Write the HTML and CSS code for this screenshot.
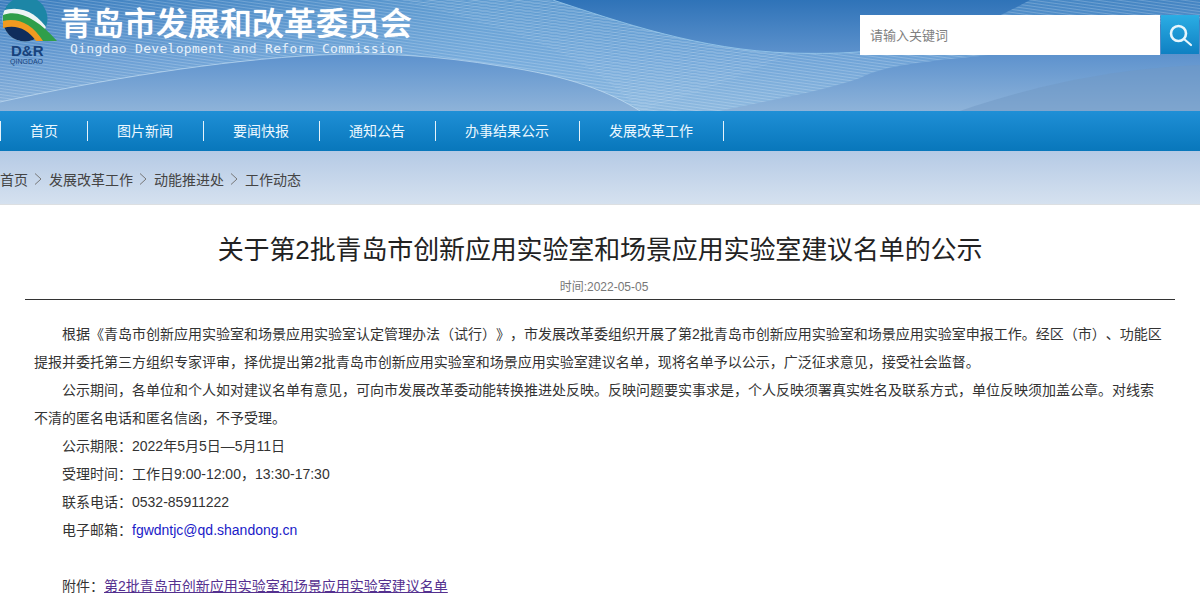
FILE: index.html
```html
<!DOCTYPE html>
<html lang="zh-CN">
<head>
    <meta charset="UTF-8">
    <title>关于第2批青岛市创新应用实验室和场景应用实验室建议名单的公示</title>
    <link rel="stylesheet" href="styles.css">
</head>
<body>
    <header class="top">
        <svg class="top-waves" width="1200" height="111" viewBox="0 0 1200 111" aria-hidden="true">
            <defs>
                <pattern id="lines" width="4" height="3" patternUnits="userSpaceOnUse" patternTransform="rotate(8)">
                    <rect width="4" height="1" fill="#fff" fill-opacity="0.2"/>
                </pattern>
                <pattern id="linesLeft" width="4" height="3" patternUnits="userSpaceOnUse" patternTransform="rotate(-12)">
                    <rect width="4" height="1" fill="#fff" fill-opacity="0.12"/>
                </pattern>
                <linearGradient id="bandFill" x1="0" y1="0" x2="1" y2="0">
                    <stop offset="0" stop-color="#8fc4ea" stop-opacity="0.12"/>
                    <stop offset="0.4" stop-color="#8fc4ea" stop-opacity="0.5"/>
                    <stop offset="0.75" stop-color="#8fc4ea" stop-opacity="0.3"/>
                    <stop offset="1" stop-color="#8fc4ea" stop-opacity="0.2"/>
                </linearGradient>
            </defs>
            <path d="M0 0H553C620 22 700 50 790 53C830 54 850 53 880 50C940 42 990 22 1030 0H1200V20C1150 25 1120 28 1090 38C1010 60 900 56 860 78C820 92 770 100 720 111H640C610 92 570 76 500 66C440 56 380 52 320 55C220 60 100 80 0 102Z" fill="url(#bandFill)"/>
            <path d="M0 0H553C620 22 700 50 790 53C830 54 850 53 880 50C940 42 990 22 1030 0H1200V20C1150 25 1120 28 1090 38C1010 60 900 56 860 78C820 92 770 100 720 111H640C610 92 570 76 500 66C440 56 380 52 320 55C220 60 100 80 0 102Z" fill="url(#lines)"/>
            <path d="M400 0H553C620 22 700 50 790 53C760 70 680 100 640 111C600 70 560 40 400 0Z" fill="url(#linesLeft)"/>
            <path d="M1200 65C1130 68 1050 80 960 111H1200Z" fill="#6f97c4" fill-opacity="0.5"/>
            <path d="M0 102C100 80 220 60 320 55C380 52 440 56 500 66C570 76 610 92 640 111" fill="none" stroke="#cfe6f7" stroke-opacity="0.6"/>
            <path d="M553 0C620 22 700 50 790 53C830 54 850 53 880 50" fill="none" stroke="#9fd0f0" stroke-opacity="0.7"/>
        </svg>
        <div class="brand">
            <div class="logo">
                <svg width="58" height="42" viewBox="0 0 58 42" aria-hidden="true">
                    <defs>
                        <clipPath id="disc"><circle cx="25" cy="19" r="22.5"/></clipPath>
                    </defs>
                    <g clip-path="url(#disc)">
                        <rect x="0" y="-5" width="50" height="50" fill="#1d86a6"/>
                        <path d="M0 12C20 3 40 14 50 34V44H0Z" fill="#eef4f4"/>
                        <path d="M0 28C14 20 30 26 40 44H0Z" fill="#0f2d5c"/>
                    </g>
                    <path d="M3 15C20 9 38 20 57 41H42C34 26 18 19 3 23Z" fill="#2f9e4a"/>
                    <path d="M3 21C17 17 33 24 43 41H36C28 29 16 24 3 28Z" fill="#f09a20"/>
                </svg>
                <strong class="logo-mark">D&amp;R</strong>
                <span class="logo-city">QINGDAO</span>
            </div>
            <div class="brand-text">
                <div class="brand-name">青岛市发展和改革委员会</div>
                <div class="brand-en">Qingdao Development and Reform Commission</div>
            </div>
        </div>
        <form class="search">
            <input class="search-input" type="text" placeholder="请输入关键词">
            <button class="search-btn" type="button" aria-label="搜索">
                <svg width="26" height="26" viewBox="0 0 26 26" aria-hidden="true">
                    <circle cx="11.5" cy="11.5" r="7.5" fill="none" stroke="#e8f6fc" stroke-width="2.6"/>
                    <path d="M17 17L24 23" stroke="#e8f6fc" stroke-width="2.2" stroke-linecap="round"/>
                </svg>
            </button>
        </form>
    </header>

    <nav class="nav">
        <a class="nav-item nav-first" href="#">首页</a>
        <a class="nav-item" href="#">图片新闻</a>
        <a class="nav-item" href="#">要闻快报</a>
        <a class="nav-item" href="#">通知公告</a>
        <a class="nav-item" href="#">办事结果公示</a>
        <a class="nav-item nav-last" href="#">发展改革工作</a>
    </nav>

    <div class="crumbs">
        <a href="#">首页</a>
        <svg class="crumb-sep" width="21" height="14" viewBox="0 0 21 14" aria-hidden="true"><path d="M7 1.5L13 7L7 12.5" fill="none" stroke="#777"/></svg>
        <a href="#">发展改革工作</a>
        <svg class="crumb-sep" width="21" height="14" viewBox="0 0 21 14" aria-hidden="true"><path d="M7 1.5L13 7L7 12.5" fill="none" stroke="#777"/></svg>
        <a href="#">动能推进处</a>
        <svg class="crumb-sep" width="21" height="14" viewBox="0 0 21 14" aria-hidden="true"><path d="M7 1.5L13 7L7 12.5" fill="none" stroke="#777"/></svg>
        <a href="#">工作动态</a>
    </div>

    <main class="article">
        <h1 class="article-title">关于第2批青岛市创新应用实验室和场景应用实验室建议名单的公示</h1>
        <div class="article-date">时间:2022-05-05</div>
        <div class="article-body">
            <p>根据《青岛市创新应用实验室和场景应用实验室认定管理办法<span class="mid">（</span>试行<span class="mid">）</span>》<span class="mid">，</span>市发展改革委组织开展了第2批青岛市创新应用实验室和场景应用实验室申报工作。经区<span class="mid">（</span>市<span class="mid">）</span>、功能区提报并委托第三方组织专家评审<span class="mid">，</span>择优提出第2批青岛市创新应用实验室和场景应用实验室建议名单<span class="mid">，</span>现将名单予以公示<span class="mid">，</span>广泛征求意见<span class="mid">，</span>接受社会监督。</p>
            <p>公示期间<span class="mid">，</span>各单位和个人如对建议名单有意见<span class="mid">，</span>可向市发展改革委动能转换推进处反映。反映问题要实事求是<span class="mid">，</span>个人反映须署真实姓名及联系方式<span class="mid">，</span>单位反映须加盖公章。对线索不清的匿名电话和匿名信函<span class="mid">，</span>不予受理。</p>
            <p>公示期限<span class="mid">：</span>2022年5月5日—5月11日</p>
            <p>受理时间<span class="mid">：</span>工作日9:00-12:00<span class="mid">，</span>13:30-17:30</p>
            <p>联系电话<span class="mid">：</span>0532-85911222</p>
            <p>电子邮箱<span class="mid">：</span><a class="mail" href="#">fgwdntjc@qd.shandong.cn</a></p>
            <p>&nbsp;</p>
            <p class="attach">附件<span class="mid">：</span><a href="#">第2批青岛市创新应用实验室和场景应用实验室建议名单</a></p>
        </div>
    </main>
</body>
</html>
```

FILE: styles.css
```css
body {
    margin: 0;
    font-family: "Liberation Sans", "Noto Sans CJK SC", sans-serif;
    font-size: 14px;
    color: #333;
    background: #fff;
    text-spacing-trim: space-all;
}

a {
    color: inherit;
    text-decoration: none;
}

.top {
    position: relative;
    height: 111px;
    overflow: hidden;
    display: flex;
    justify-content: space-between;
    align-items: flex-start;
    background: linear-gradient(#2f73b8, #6396cf 55%, #8eb3d9);
}

.top-waves {
    position: absolute;
    left: 0;
    top: 0;
}

.brand {
    position: relative;
    display: flex;
}

.logo {
    width: 60px;
    height: 70px;
    display: flex;
    flex-direction: column;
    align-items: flex-start;
}

.logo svg {
    display: block;
}

.logo-mark {
    margin: 2px 0 0 11px;
    font-size: 15px;
    line-height: 14px;
    color: #17427c;
}

.logo-city {
    margin-left: 10px;
    font-size: 7px;
    line-height: 8px;
    color: #17427c;
}

.brand-text {
    padding-top: 6px;
    color: #fff;
}

.brand-name {
    font-size: 32px;
    line-height: 37px;
    font-weight: 500;
    white-space: nowrap;
    text-shadow: 0 0 1px #fff;
}

.brand-en {
    margin: -2px 0 0 10px;
    font-family: "DejaVu Sans Mono", monospace;
    font-size: 13px;
    letter-spacing: 0.3px;
    line-height: 16px;
    white-space: nowrap;
    color: #e6f0fa;
}

.search {
    position: relative;
    display: flex;
    margin: 15px 1px 0 0;
}

.search-input {
    width: 300px;
    height: 40px;
    padding: 0 10px;
    box-sizing: border-box;
    border: none;
    border-radius: 0;
    outline: none;
    font-family: inherit;
    font-size: 13px;
    background: #fff;
}

.search-input::placeholder {
    color: #808080;
}

.search-btn {
    width: 38px;
    height: 39px;
    margin-left: 1px;
    padding: 0;
    border: none;
    display: flex;
    align-items: center;
    justify-content: center;
    background: linear-gradient(#2badE4, #0f80c2);
}

.nav {
    height: 40px;
    display: flex;
    align-items: center;
    background: linear-gradient(#1f8fd6, #0877bb);
}

.nav-item {
    height: 20px;
    line-height: 20px;
    padding: 0 30px 0 29px;
    border-left: 1px solid #e6f3fb;
    color: #ecf8ff;
}

.nav-first {
    padding-right: 29px;
}

.nav-last {
    border-right: 1px solid #e6f3fb;
}

.crumbs {
    height: 51px;
    display: flex;
    align-items: center;
    padding-top: 2px;
    border-bottom: 1px solid #dcdfe2;
    color: #444;
    background: linear-gradient(#b5cae5, #d5e1ef);
}

.crumb-sep {
    display: block;
}

.article {
    padding: 0 25px;
}

.article-title {
    margin: 0;
    padding-top: 27px;
    font-size: 26px;
    letter-spacing: -0.13px;
    line-height: 36px;
    font-weight: normal;
    text-align: center;
    color: #222;
}

.article-date {
    margin-top: 10px;
    padding: 0 0 3px 8px;
    border-bottom: 1px solid #333;
    font-size: 12px;
    line-height: 18px;
    text-align: center;
    color: #777;
}

.article-body {
    padding: 20px 9px 0;
}

.article-body p {
    margin: 0;
    height: 28px;
    line-height: 28px;
    text-indent: 2em;
    color: #333;
}

.article-body p:nth-child(-n+2) {
    height: 56px;
}

/* 全角标点居中 */
.mid {
    font-family: "Noto Sans CJK TC", sans-serif;
    line-height: 1;
}

.mail {
    color: #1a1ac8;
}

.attach {
    color: #5f4a8c;
}

.attach a {
    color: #54308f;
    text-decoration: underline;
}
```
